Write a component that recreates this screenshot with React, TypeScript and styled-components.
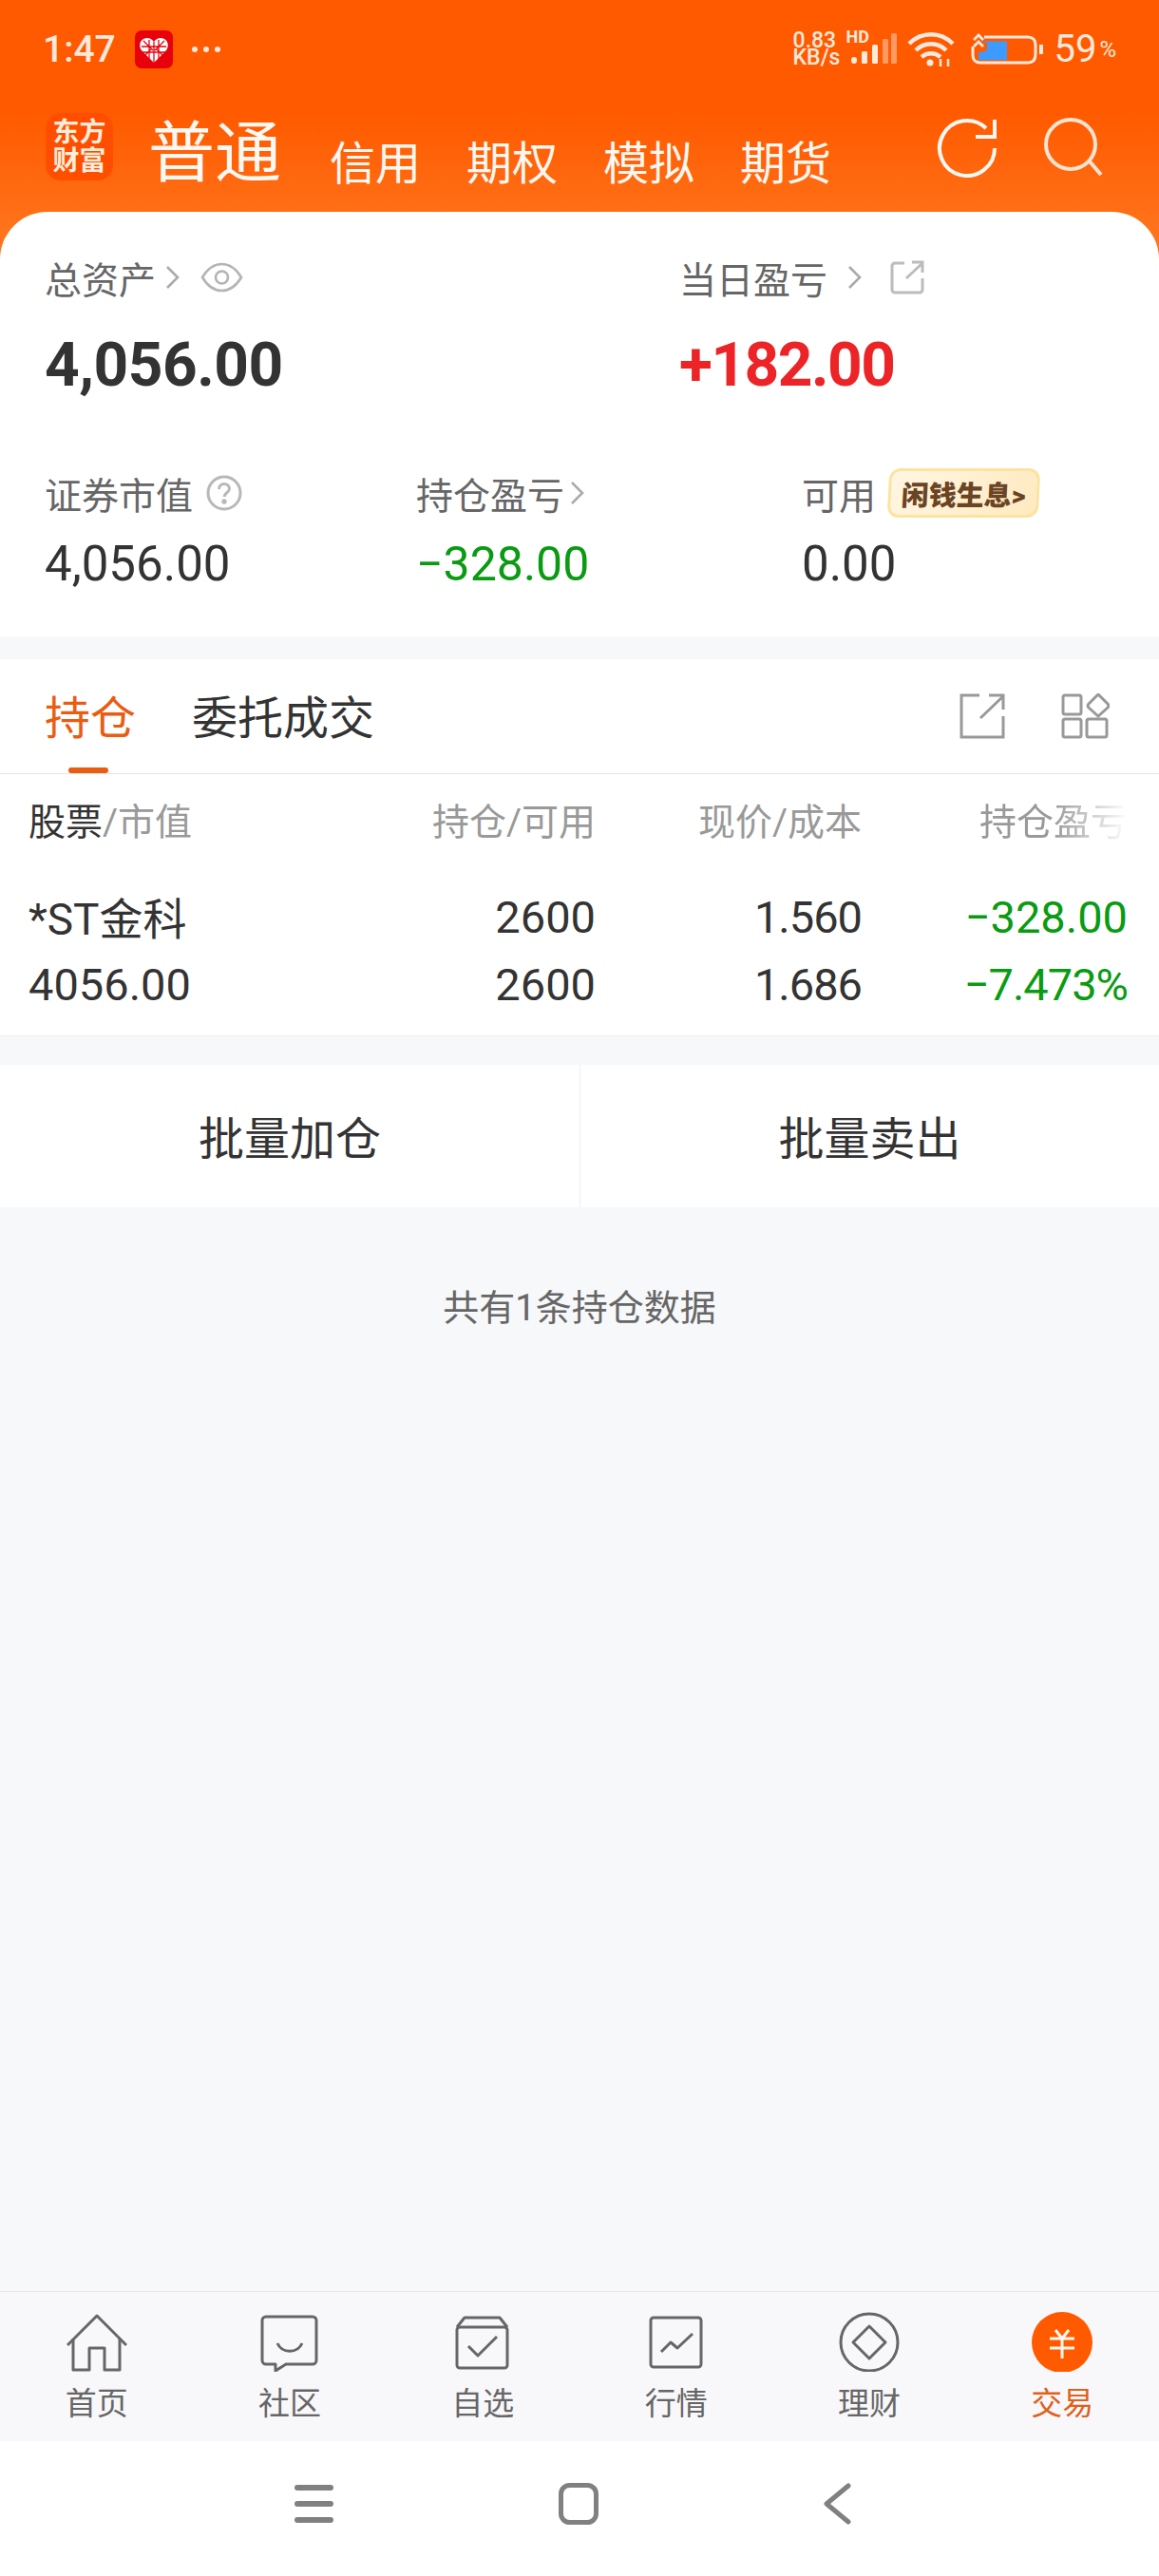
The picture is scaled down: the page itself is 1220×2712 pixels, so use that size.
import React from "react";
import styled, { createGlobalStyle } from "styled-components";

const GlobalStyle = createGlobalStyle`
  html, body {
    margin: 0;
    padding: 0;
    background: #f7f8fa;
  }
  * {
    box-sizing: border-box;
  }
`

const Page = styled.div`
  display: flex;
  flex-direction: column;
  width: 1220px;
  height: 2712px;
  overflow: hidden;
  background: #f7f8fa;
  font-family: Roboto, "Noto Sans CJK SC", sans-serif;
  color: #333;
`

const Top = styled.div`
  background: #fff linear-gradient(180deg, #ff5a00 0, #ff5a00 120px, #ff7a22 280px) no-repeat;
  background-size: 100% 280px;
`

const StatusBar = styled.div`
  display: flex;
  align-items: center;
  height: 100px;
  padding: 4px 45px 0 45px;
  color: #ffe9dc;
`

const Clock = styled.span`
  font-size: 39px;
  font-weight: 500;
  line-height: 1;
  width: 97px;
`

const DotRow = styled.div`
  display: flex;
  gap: 6px;
  margin-left: 20px;
`

const Dot = styled.i`
  width: 6px;
  height: 6px;
  border-radius: 50%;
  background: #ffe9dc;
`

const StatusRight = styled.div`
  display: flex;
  align-items: center;
  margin-left: auto;
`

const Speed = styled.div`
  display: flex;
  flex-direction: column;
  font-size: 23px;
  font-weight: 500;
  line-height: 18px;
`

const Signal = styled.div`
  position: relative;
  width: 56px;
  height: 36px;
  margin-left: 4px;
`

const HdTag = styled.span`
  position: absolute;
  left: 2px;
  top: -3px;
  font-size: 18px;
  font-weight: 700;
  line-height: 16px;
`

const Percent = styled.span`
  font-size: 40px;
  line-height: 1;
  margin-left: 11px;
`

const PercentSign = styled.span`
  font-size: 24px;
  margin-left: 3px;
`

const NavRow = styled.div`
  display: flex;
  align-items: flex-end;
  height: 123px;
  padding: 0 58px 26px 48px;
  color: #fff8f2;
`

const Logo = styled.div`
  display: flex;
  flex-direction: column;
  align-items: center;
  justify-content: center;
  width: 71px;
  height: 71px;
  margin-bottom: 7px;
  border-radius: 16px;
  background: #ff4e00;
  font-size: 28px;
  font-weight: 700;
  line-height: 30px;
  color: #ffeede;
`

const Title = styled.span`
  margin: 0 3px 0 37px;
  font-size: 70px;
  line-height: 70px;
`

const SubTabs = styled.div`
  display: flex;
  gap: 48px;
  margin-left: 48px;
`

const SubTab = styled.span`
  font-size: 48px;
  line-height: 48px;
`

const HeadIcons = styled.div`
  display: flex;
  gap: 50px;
  margin: 0 0 10px auto;
`

const Summary = styled.section`
  padding: 47px 47px 46px;
  background: #fff;
  border-radius: 50px 50px 0 0;
`

const HeroRow = styled.div`
  display: grid;
  grid-template-columns: 668px 1fr;
`

const Label = styled.div`
  display: flex;
  align-items: center;
  height: 44px;
  font-size: 39px;
  color: #666;
`

const HeroValue = styled.div<{ $red?: boolean }>`
  margin-top: 35px;
  font-size: 64px;
  font-weight: 700;
  line-height: 72px;
  letter-spacing: ${(p) => (p.$red ? "-1.5px" : "-0.5px")};
  color: ${(p) => (p.$red ? "#ec2427" : "#333")};
`

const StatRow = styled.div`
  display: grid;
  grid-template-columns: 391px 406px 1fr;
  margin-top: 72px;
`

const StatLabel = styled(Label)`
  height: 52px;
`

const StatValue = styled.div<{ $green?: boolean }>`
  margin-top: 19px;
  font-size: ${(p) => (p.$green ? 50 : 51)}px;
  line-height: 60px;
  color: ${(p) => (p.$green ? "#0a9b13" : "#333")};
`

const Badge = styled.span`
  display: inline-flex;
  align-items: center;
  justify-content: center;
  width: 159px;
  height: 52px;
  margin-left: 13px;
  border: 3px solid #fde3a0;
  border-radius: 12px;
  background: linear-gradient(120deg, #fff6e2, #ffeac0);
  font-size: 29px;
  font-weight: 900;
  color: #6b4423;
  transform: skewX(-3deg);
`

const Holdings = styled.section`
  margin-top: 24px;
  background: #fff;
  border-bottom: 1px solid #eeeeee;
`

const TabBar = styled.div`
  display: flex;
  align-items: center;
  height: 121px;
  padding: 0 52px 0 47px;
  border-bottom: 1px solid #e4e4e4;
`

const Tab = styled.div<{ $active?: boolean }>`
  position: relative;
  height: 120px;
  margin-right: 59px;
  font-size: 48px;
  line-height: 125px;
  color: ${(p) => (p.$active ? "#e95c12" : "#333")};
`

const TabMark = styled.i`
  position: absolute;
  left: 25px;
  bottom: 0;
  width: 42px;
  height: 6px;
  border-radius: 3px;
  background: #e95c12;
`

const TabIcons = styled.div`
  display: flex;
  align-items: center;
  gap: 59px;
  margin-left: auto;
`

const TableRow = styled.div<{ $head?: boolean }>`
  display: grid;
  grid-template-columns: 1fr 280px 280px 280px;
  align-items: center;
  height: ${(p) => (p.$head ? 94 : 71)}px;
  padding: 0 33px 0 30px;
  font-size: ${(p) => (p.$head ? 39 : 47)}px;
  color: ${(p) => (p.$head ? "#999" : "#333")};
`

const Rows = styled.div`
  padding: 21px 0 18px;
`

const NameHead = styled.span`
  color: #333;
`

const StockName = styled.span`
  padding-bottom: 4px;
  font-size: 46px;
`

const Num = styled.span<{ $green?: boolean; $fade?: boolean; $tight?: boolean }>`
  text-align: right;
  color: ${(p) => (p.$green ? "#0a9b13" : "inherit")};
  ${(p) => p.$tight && "letter-spacing: -1px;"}
  ${(p) => p.$fade && "mask-image: linear-gradient(90deg, #000 72%, transparent 100%);"}
`

const BatchBar = styled.div`
  display: grid;
  grid-template-columns: 1fr 1fr;
  height: 150px;
  margin-top: 30px;
  background: #fff;
`

const BatchBtn = styled.div`
  display: flex;
  align-items: center;
  justify-content: center;
  padding-bottom: 3px;
  font-size: 48px;
  & + & {
    border-left: 1px solid #efefef;
  }
`

const Content = styled.main`
  flex: 1;
  padding-top: 84px;
  text-align: center;
  font-size: 38px;
  line-height: 44px;
  color: #666;
`

const BottomNav = styled.nav`
  display: grid;
  grid-template-columns: repeat(6, 1fr);
  height: 158px;
  padding-top: 20px;
  border-top: 1px solid #e6e6e8;
  background: #f8f8fa;
`

const NavItem = styled.div<{ $active?: boolean }>`
  display: flex;
  flex-direction: column;
  align-items: center;
  gap: 16px;
  font-size: 33px;
  line-height: 36px;
  color: ${(p) => (p.$active ? "#e0601c" : "#666")};
`

const SystemBar = styled.div`
  display: flex;
  align-items: center;
  justify-content: space-between;
  height: 142px;
  padding: 0 324px 10px 310px;
  background: #fff;
`

const Gap = styled.svg<{ $ml: number }>`
  flex: none;
  margin-left: ${(p) => p.$ml}px;
`

const Chevron = ({ ml }: { ml: number }) => (
  <Gap $ml={ml} width="15" height="26" viewBox="0 0 15 26" fill="none" stroke="#aaa" strokeWidth="2.6">
    <path d="M2 2l11 11L2 24" />
  </Gap>
)

const Eye = () => (
  <Gap $ml={22} width="45" height="32" viewBox="0 0 45 32" fill="none" stroke="#b4b4b4" strokeWidth="2.6">
    <path d="M2 16C8 6 15 2 22.5 2S37 6 43 16c-6 10-13 14-20.500 14S8 26 2 16z" />
    <circle cx="22.500" cy="16" r="6.500" />
  </Gap>
)

const ExternalSmall = () => (
  <Gap $ml={30} width="36" height="36" viewBox="0 0 36 36" fill="none" stroke="#bcbcbc" strokeWidth="3">
    <path d="M15 3H5a3 3 0 0 0-3 3v25a3 3 0 0 0 3 3h26a3 3 0 0 0 3-3V19" />
    <path d="M17 19L34 3M23 2h11v11" />
  </Gap>
)

const Help = () => (
  <Gap $ml={14} width="38" height="38" viewBox="0 0 38 38" fill="none" stroke="#b8b8b8" strokeWidth="3">
    <circle cx="19" cy="19" r="17" />
    <path d="M13.500 15c0-3.500 2.500-5.500 5.500-5.500s5.500 2 5.500 5c0 4-5.500 4.500-5.500 8.500" />
    <circle cx="19" cy="28" r="1.200" fill="#b8b8b8" />
  </Gap>
)

const PddIcon = () => (
  <Gap $ml={0} width="40" height="40" viewBox="0 0 40 40">
    <rect width="40" height="40" rx="7" fill="#e8000b" />
    <path d="M20 34L7 21c-3-4-2-10 2-12s8-1 11 3c3-4 7-5 11-3s5 8 2 12z" fill="#fff" />
    <path d="M20 12v22M15 10v20M25 10v20M7 17h26M7 23h26M9 11l10 10M31 11L21 21M11 26l6-6M29 26l-6-6" stroke="#e8000b" strokeWidth="1.300" fill="none" />
  </Gap>
)

const SignalBars = () => (
  <svg width="56" height="36" viewBox="0 0 56 36">
    <g fill="#ffe9dc">
      <rect x="8" y="26" width="6" height="7" rx="3" />
      <rect x="19" y="20" width="6" height="13" rx="1.500" />
      <rect x="30" y="13" width="6" height="20" rx="1.500" />
    </g>
    <g fill="#ffe9dc" opacity="0.45">
      <rect x="41" y="7" width="6" height="26" rx="1.500" />
      <rect x="50" y="1" width="6" height="32" rx="1.500" />
    </g>
  </svg>
)

const Wifi = () => (
  <Gap $ml={11} width="50" height="38" viewBox="0 0 50 38" fill="none" stroke="#ffe9dc" strokeWidth="4.500">
    <path d="M2 13C15 0 35 0 48 13" />
    <path d="M9 20c9-9 23-9 32 0" />
    <path d="M15 27c6-5 14-5 20 0" />
    <circle cx="24" cy="33" r="3.500" fill="#ffe9dc" stroke="none" />
    <path d="M35 37v-8M43 37v-8" strokeWidth="2.500" />
  </Gap>
)

const Battery = () => (
  <Gap $ml={17} width="76" height="38" viewBox="0 0 76 38" fill="none" stroke="#ffe9dc" strokeWidth="3">
    <path d="M14 6h46c5 0 8 3 8 8v10c0 6-3 9-8 9H10c-5 0-8-3-8-8V16" />
    <path d="M76 14v10" strokeWidth="4" transform="translate(-2 0)" />
    <path d="M10 12h28v21H8v-8l9-3v-8z" fill="#3d9bff" stroke="none" transform="translate(0 -1) scale(1 0.95)" />
    <path d="M3 9l5-5 5 5M3 16l5-5 5 5" strokeWidth="2.800" />
  </Gap>
)

const Refresh = () => (
  <svg width="63" height="64" viewBox="0 0 63 64" fill="none" stroke="#fff8f2" strokeWidth="4">
    <path d="M61 33A29 29 0 1 1 52 12" />
    <path d="M61 3v18H41" />
  </svg>
)

const Search = () => (
  <svg width="63" height="64" viewBox="0 0 63 64" fill="none" stroke="#ffe4d2" strokeWidth="4">
    <circle cx="28" cy="29" r="26" />
    <path d="M48 47l12 14" />
  </svg>
)

const Share = () => (
  <svg width="48" height="48" viewBox="0 0 48 48" fill="none" stroke="#999" strokeWidth="3">
    <path d="M21 2H2v44h44V24" />
    <path d="M22 26L46 3M31 2h15v15" />
  </svg>
)

const Layouts = () => (
  <svg width="51" height="48" viewBox="0 0 51 48" fill="none" stroke="#999" strokeWidth="3">
    <rect x="2" y="2" width="19" height="20" rx="2" />
    <rect x="2" y="27" width="19" height="19" rx="2" />
    <rect x="27" y="27" width="21" height="19" rx="2" />
    <path d="M39 1l10 10a3 3 0 0 1 0 4l-10 9-10-9a3 3 0 0 1 0-4z" />
  </svg>
)

const NavGlyph = styled.svg`
  width: 64px;
  height: 64px;
  fill: none;
  stroke: #666;
  stroke-width: 3;
  stroke-linejoin: round;
`

const HomeIcon = () => (
  <NavGlyph viewBox="0 0 64 64">
    <path d="M1 36L32 5l31 31" />
    <path d="M7 29v33h17V39h16v23h16V29" />
  </NavGlyph>
)

const ChatIcon = () => (
  <NavGlyph viewBox="0 0 64 64">
    <path d="M7 6h49a4 4 0 0 1 4 4v42a4 4 0 0 1-4 4H28l-11 7v-7H7a4 4 0 0 1-4-4V10a4 4 0 0 1 4-4z" />
    <path d="M19 34c5 11 21 11 26 0" />
  </NavGlyph>
)

const WatchIcon = () => (
  <NavGlyph viewBox="0 0 64 64">
    <rect x="5" y="17" width="53" height="43" rx="3" />
    <path d="M5 17l8-10h37l8 10" />
    <path d="M17 37l10 10 20-20" />
  </NavGlyph>
)

const MarketIcon = () => (
  <NavGlyph viewBox="0 0 64 64">
    <rect x="5" y="7" width="53" height="52" rx="3" />
    <path d="M16 43l10-10 7 6 16-15" />
  </NavGlyph>
)

const WealthIcon = () => (
  <NavGlyph viewBox="0 0 64 64">
    <circle cx="32" cy="33" r="30" />
    <path d="M32 16l17 17-17 17-17-17z" />
  </NavGlyph>
)

const TradeIcon = () => (
  <NavGlyph viewBox="0 0 64 64">
    <circle cx="32" cy="33" r="32" fill="#ff5a00" stroke="none" />
    <path d="M25 20l7 9 7-9M19 29h26M19 39h26M32 29v21" stroke="#fff6ee" />
  </NavGlyph>
)

const navItems = [
  { label: "首页", icon: <HomeIcon /> },
  { label: "社区", icon: <ChatIcon /> },
  { label: "自选", icon: <WatchIcon /> },
  { label: "行情", icon: <MarketIcon /> },
  { label: "理财", icon: <WealthIcon /> },
  { label: "交易", icon: <TradeIcon />, active: true },
]

const App = () => {
  return (
    <Page>
      <GlobalStyle />
      <Top>
        <StatusBar>
          <Clock>1:47</Clock>
          <PddIcon />
          <DotRow>
            <Dot />
            <Dot />
            <Dot />
          </DotRow>
          <StatusRight>
            <Speed>
              <span>0.83</span>
              <span>KB/s</span>
            </Speed>
            <Signal>
              <HdTag>HD</HdTag>
              <SignalBars />
            </Signal>
            <Wifi />
            <Battery />
            <Percent>59</Percent>
            <PercentSign>%</PercentSign>
          </StatusRight>
        </StatusBar>
        <NavRow>
          <Logo>
            <span>东方</span>
            <span>财富</span>
          </Logo>
          <Title>普通</Title>
          <SubTabs>
            <SubTab>信用</SubTab>
            <SubTab>期权</SubTab>
            <SubTab>模拟</SubTab>
            <SubTab>期货</SubTab>
          </SubTabs>
          <HeadIcons>
            <Refresh />
            <Search />
          </HeadIcons>
        </NavRow>
        <Summary>
          <HeroRow>
            <div>
              <Label>
                总资产
                <Chevron ml={10} />
                <Eye />
              </Label>
              <HeroValue>4,056.00</HeroValue>
            </div>
            <div>
              <Label>
                当日盈亏
                <Chevron ml={21} />
                <ExternalSmall />
              </Label>
              <HeroValue $red>+182.00</HeroValue>
            </div>
          </HeroRow>
          <StatRow>
            <div>
              <StatLabel>
                证券市值
                <Help />
              </StatLabel>
              <StatValue>4,056.00</StatValue>
            </div>
            <div>
              <StatLabel>
                持仓盈亏
                <Chevron ml={6} />
              </StatLabel>
              <StatValue $green>−328.00</StatValue>
            </div>
            <div>
              <StatLabel>
                可用
                <Badge>闲钱生息&gt;</Badge>
              </StatLabel>
              <StatValue>0.00</StatValue>
            </div>
          </StatRow>
        </Summary>
      </Top>

      <Holdings>
        <TabBar>
          <Tab $active>
            持仓
            <TabMark />
          </Tab>
          <Tab>委托成交</Tab>
          <TabIcons>
            <Share />
            <Layouts />
          </TabIcons>
        </TabBar>
        <TableRow $head>
          <span>
            <NameHead>股票</NameHead>/市值
          </span>
          <Num>持仓/可用</Num>
          <Num>现价/成本</Num>
          <Num $fade>持仓盈亏</Num>
        </TableRow>
        <Rows>
          <TableRow>
            <StockName>*ST金科</StockName>
            <Num>2600</Num>
            <Num $tight>1.560</Num>
            <Num $green>−328.00</Num>
          </TableRow>
          <TableRow>
            <span>4056.00</span>
            <Num>2600</Num>
            <Num $tight>1.686</Num>
            <Num $green $tight>−7.473%</Num>
          </TableRow>
        </Rows>
      </Holdings>

      <BatchBar>
        <BatchBtn>批量加仓</BatchBtn>
        <BatchBtn>批量卖出</BatchBtn>
      </BatchBar>

      <Content>共有1条持仓数据</Content>

      <BottomNav>
        {navItems.map((item) => (
          <NavItem key={item.label} $active={item.active}>
            {item.icon}
            {item.label}
          </NavItem>
        ))}
      </BottomNav>

      <SystemBar>
        <svg width="41" height="42" viewBox="0 0 41 42" fill="#808080">
          <rect y="1" width="41" height="6" rx="3" />
          <rect y="18" width="41" height="6" rx="3" />
          <rect y="35" width="41" height="6" rx="3" />
        </svg>
        <svg width="42" height="44" viewBox="0 0 42 44" fill="none" stroke="#808080" strokeWidth="5">
          <rect x="2.500" y="2.500" width="37" height="39" rx="9" />
        </svg>
        <svg width="30" height="44" viewBox="0 0 30 44" fill="none" stroke="#808080" strokeWidth="5" strokeLinecap="round" strokeLinejoin="round">
          <path d="M27 3L4 22l23 19" />
        </svg>
      </SystemBar>
    </Page>
  )
}

export default App;
